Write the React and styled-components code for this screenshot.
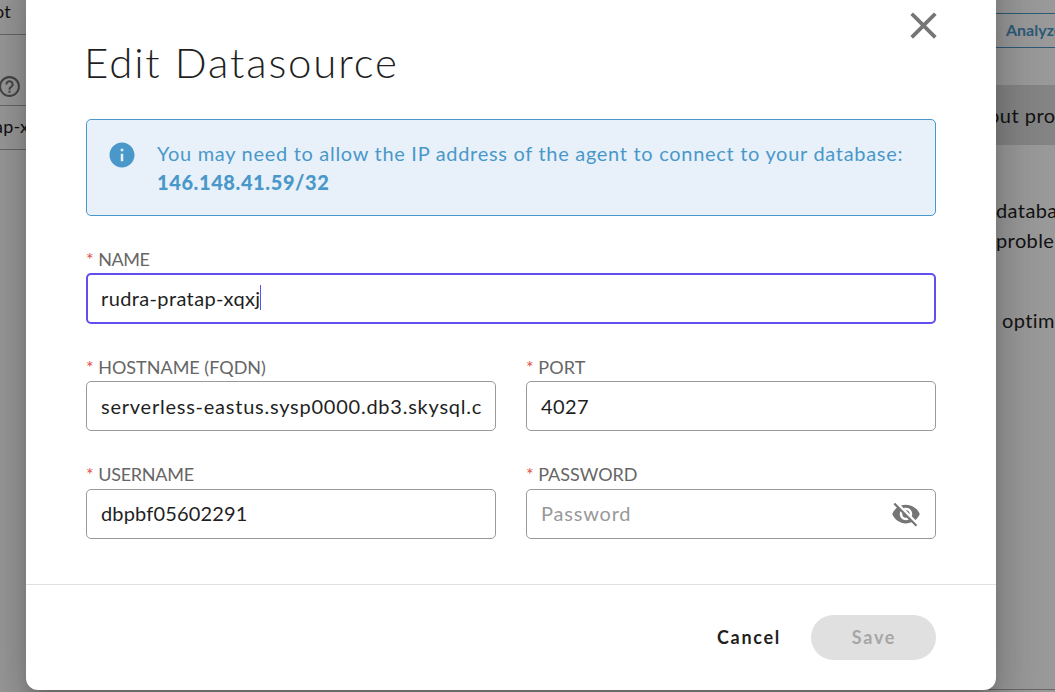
import React from 'react';
import styled, { createGlobalStyle } from 'styled-components';
import { MdClose, MdInfo, MdVisibilityOff, MdHelpOutline } from 'react-icons/md';

const GlobalStyle = createGlobalStyle`
  * { box-sizing: border-box; }
  body {
    margin: 0;
    overflow: hidden;
    background: #fff;
    color: #1f1f1f;
    font-family: Lato, "Liberation Sans", sans-serif;
    font-size: 20px;
  }
`;

const Screen = styled.div`
  position: relative;
  width: 1055px;
  height: 692px;
  overflow: hidden;
`;

const Page = styled.div`
  display: flex;
  justify-content: space-between;
  height: 690px;
`;

const Sidebar = styled.aside`
  width: 60px;
  white-space: nowrap;
`;

const SideRow = styled.div`
  display: flex;
  align-items: center;
  height: ${(p) => p.$height}px;
  padding-bottom: ${(p) => p.$lift || 0}px;
  padding-top: ${(p) => p.$drop || 0}px;
  border-bottom: 1px solid #aaa;
  font-size: ${(p) => p.$size || 20}px;
  letter-spacing: 0.2px;

  svg { flex: none; color: #757575; }
`;

const Shift = styled.span`
  margin-left: ${(p) => p.$x}px;
`;

const Main = styled.main`
  width: 95px;
  border-bottom: 1px solid #aaa;
  white-space: nowrap;
`;

const AnalyzeButton = styled.div`
  height: 35px;
  margin-top: 13px;
  padding-left: 46px;
  border: solid #4a98c9;
  border-width: 1px 0;
  color: #4a98c9;
  font-size: 16px;
  font-weight: 700;
  line-height: 32px;
`;

const Banner = styled.div`
  height: 60px;
  margin-top: 37px;
  padding-left: 28px;
  background: #dcdcdc;
  line-height: 60px;
  letter-spacing: 0.5px;
`;

const Copy = styled.p`
  margin: ${(p) => p.$top}px 0 0;
  padding-left: ${(p) => p.$left}px;
  line-height: 30px;
  letter-spacing: 0.4px;
`;

const Overlay = styled.div`
  position: absolute;
  inset: 0;
  padding: 0 59px 0 26px;
  background: rgba(0, 0, 0, 0.4);
`;

const Dialog = styled.section`
  display: flex;
  flex-direction: column;
  width: 970px;
  height: 730px;
  margin-top: -40px;
  padding-top: 40px;
  border-radius: 12px;
  background: #fff;
  box-shadow: 0 11px 15px -7px rgba(0, 0, 0, 0.2),
    0 24px 38px 3px rgba(0, 0, 0, 0.14), 0 9px 46px 8px rgba(0, 0, 0, 0.12);
`;

const Header = styled.header`
  display: flex;
  justify-content: space-between;
  height: 119px;
  padding: 0 50px 0 58px;
`;

const Title = styled.h1`
  margin: 36px 0 0;
  font-size: 42px;
  font-weight: 300;
  line-height: 52px;
  letter-spacing: 1.85px;
`;

const CloseButton = styled.div`
  height: 45px;
  margin-top: 2.5px;
  color: #757575;
`;

const Body = styled.div`
  height: 465px;
  padding: 0 60px;
`;

const Alert = styled.div`
  display: flex;
  gap: 20px;
  height: 97px;
  padding: 20px;
  border: 1px solid #4a98c9;
  border-radius: 5px;
  background: #e8f1f9;
  color: #4a98c9;
  line-height: 28px;

  svg { flex: none; margin-top: -0.5px; }
`;

const AlertText = styled.div`
  margin-top: -1px;
  letter-spacing: 0.7px;
  white-space: nowrap;
`;

const Address = styled.strong`
  display: block;
  padding-top: 1px;
  font-weight: 900;
  letter-spacing: 0.6px;
`;

const Fields = styled.div`
  display: grid;
  grid-template-columns: 410px 410px;
  column-gap: 30px;
  padding-top: 34px;
`;

const Field = styled.div`
  grid-column: ${(p) => (p.$wide ? '1 / -1' : 'auto')};
  height: ${(p) => (p.$wide ? 108 : 107.5)}px;
`;

const Label = styled.div`
  height: 23px;
  color: #666;
  font-size: 18px;
  line-height: ${(p) => (p.$raised ? 17 : 18)}px;
  letter-spacing: ${(p) => p.$spacing}px;
`;

const Required = styled.span`
  margin-right: 4.5px;
  color: #e0504d;
  letter-spacing: 0;
`;

const InputBox = styled.div`
  display: flex;
  align-items: center;
  justify-content: space-between;
  height: ${(p) => (p.$focused ? 51 : 50)}px;
  padding: 0 ${(p) => (p.$focused ? 13 : 14)}px;
  border: ${(p) => (p.$focused ? '2px solid #604fee' : '1px solid #999')};
  border-radius: 5px;
  color: ${(p) => (p.$placeholder ? '#999' : '#1f1f1f')};
  letter-spacing: ${(p) => p.$spacing || 0}px;
  line-height: 28px;
  white-space: nowrap;

  svg { color: #757575; }
`;

const Value = styled.span`
  display: flex;
  align-items: center;
  padding-bottom: ${(p) => (p.$raised ? 2 : 0)}px;
`;

const Caret = styled.i`
  width: 1px;
  height: 25px;
  margin-left: -1px;
  background: #604fee;
`;

const Footer = styled.footer`
  display: flex;
  align-items: flex-start;
  justify-content: flex-end;
  flex: 1;
  padding: 30px 60px 0 0;
  border-top: 1px solid #e0e0e0;
`;

const Button = styled.div`
  width: 125px;
  height: 45px;
  padding-left: 1px;
  border-radius: 23px;
  background: ${(p) => (p.$disabled ? '#e0e0e0' : 'transparent')};
  color: ${(p) => (p.$disabled ? '#a6a6a6' : '#1f1f1f')};
  font-size: 18px;
  font-weight: 700;
  line-height: 45px;
  letter-spacing: 1.7px;
  text-align: center;
`;

function TextField({ label, labelSpacing, labelRaised, value, placeholder, focused, wide, raised, spacing, icon }) {
  return (
    <Field $wide={wide}>
      <Label $spacing={labelSpacing} $raised={labelRaised}>
        <Required>*</Required>
        {label}
      </Label>
      <InputBox $focused={focused} $placeholder={!value} $spacing={spacing}>
        <Value $raised={raised}>
          {value || placeholder}
          {focused && <Caret />}
        </Value>
        {icon}
      </InputBox>
    </Field>
  );
}

export default function App() {
  return (
    <Screen>
      <GlobalStyle />
      <Page>
        <Sidebar>
          <SideRow $height={35} $lift={12} $size={18}><Shift $x={-6}>ot</Shift></SideRow>
          <SideRow $height={71} $drop={33}>
            <Shift $x={-3.5} /><MdHelpOutline size={25} />
          </SideRow>
          <SideRow $height={44} $lift={3} $size={18}><Shift $x={-6}>ap-xqxj</Shift></SideRow>
        </Sidebar>
        <Main>
          <AnalyzeButton>Analyze</AnalyzeButton>
          <Banner>out pro</Banner>
          <Copy $top={50} $left={36}>databa</Copy>
          <Copy $top={0} $left={36}>proble</Copy>
          <Copy $top={50} $left={42}>optim</Copy>
        </Main>
      </Page>
      <Overlay>
        <Dialog>
          <Header>
            <Title>Edit Datasource</Title>
            <CloseButton><MdClose size={45} /></CloseButton>
          </Header>
          <Body>
            <Alert>
              <MdInfo size={30} />
              <AlertText>
                You may need to allow the IP address of the agent to connect to your database:
                <Address>146.148.41.59/32</Address>
              </AlertText>
            </Alert>
            <Fields>
              <TextField wide focused raised label="NAME" labelSpacing={-0.4} value="rudra-pratap-xqxj" spacing={0.37} />
              <TextField label="HOSTNAME (FQDN)" labelSpacing={0} value="serverless-eastus.sysp0000.db3.skysql.c" spacing={0.76} />
              <TextField label="PORT" labelSpacing={0.2} value="4027" spacing={0.4} />
              <TextField raised labelRaised label="USERNAME" labelSpacing={-0.25} value="dbpbf05602291" spacing={0.15} />
              <TextField raised labelRaised label="PASSWORD" labelSpacing={0} placeholder="Password" spacing={0.8} icon={<MdVisibilityOff size={30} />} />
            </Fields>
          </Body>
          <Footer>
            <Button>Cancel</Button>
            <Button $disabled>Save</Button>
          </Footer>
        </Dialog>
      </Overlay>
    </Screen>
  );
}
